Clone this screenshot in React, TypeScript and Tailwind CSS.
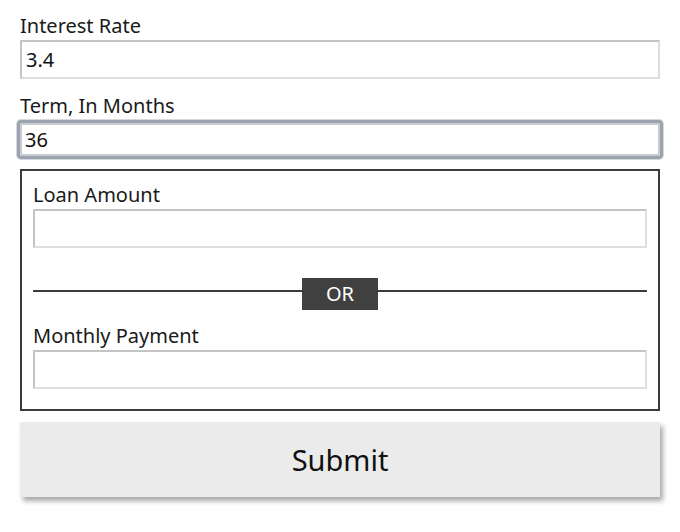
import React from "react";

const inputBase =
  "block w-full h-[39px] bg-white border-2 border-t-[#c4c4c4] border-l-[#c4c4c4] border-r-[#dedede] border-b-[#dedede] px-[4px] text-[20px] text-[#111] outline-none";

export default function App() {
  return (
    <div
      className="w-[680px] h-[532px] bg-white px-[20px] pt-[12px]"
      style={{ fontFamily: '"Noto Sans", "Open Sans", sans-serif' }}
    >
      <div>
        <div className="h-[28px] text-[20px] leading-[28px] text-[#1a1a1a]">Interest Rate</div>
        <input className={inputBase} defaultValue="3.4" />
      </div>
      <div className="mt-[13px]">
        <div className="h-[28px] text-[20px] leading-[28px] text-[#1a1a1a]">Term, In Months</div>
        <div className="rounded-[4px] border-[3px] border-[#9aa3ae] shadow-[0_0_0_1px_#d6dae0] -mx-[3px]">
          <input className="block w-full h-[33px] bg-white border-2 border-[#c8ccd2] px-[3px] text-[20px] text-[#111] outline-none" defaultValue="36" />
        </div>
      </div>
      <div className="mt-[10px] border-2 border-[#3c3c3c] px-[11px] pt-[10px] pb-[20px]">
        <div className="h-[28px] text-[20px] leading-[28px] text-[#1a1a1a]">Loan Amount</div>
        <input className={inputBase} />
        <div className="relative mt-[30px] h-[32px] flex items-center justify-center">
          <div className="absolute left-0 right-0 top-[12px] h-[2px] bg-[#3c3c3c]" />
          <div className="relative w-[76px] h-[32px] bg-[#404040] text-white text-[20px] flex items-center justify-center">OR</div>
        </div>
        <div className="mt-[12px] h-[28px] text-[20px] leading-[28px] text-[#1a1a1a]">Monthly Payment</div>
        <input className={inputBase} />
      </div>
      <button className="mt-[11px] w-full h-[75px] bg-[#ebebeb] text-[29px] text-[#111] shadow-[3px_4px_5px_rgba(0,0,0,0.35)]">
        Submit
      </button>
    </div>
  );
}
